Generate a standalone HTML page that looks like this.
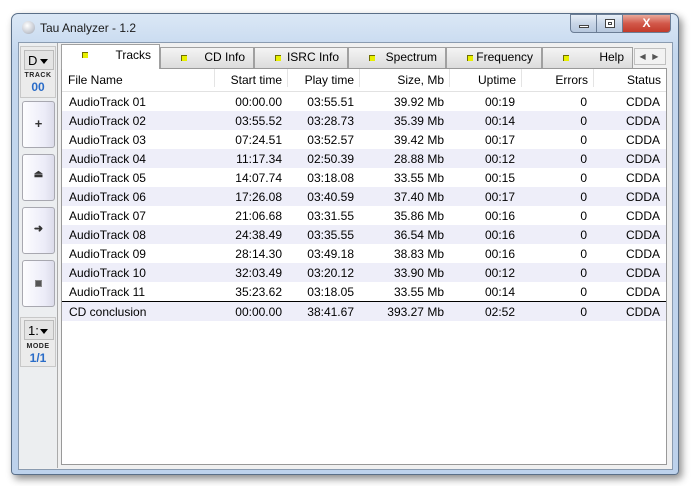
<!DOCTYPE html>
<html><head><style>
*{margin:0;padding:0;box-sizing:border-box}
body{width:691px;height:486px;background:#fff;position:relative;overflow:hidden;font-family:"Liberation Sans",sans-serif;font-size:12px;color:#000}
.win{position:absolute;left:11px;top:13px;width:668px;height:462px;border:1px solid #5a6f88;border-radius:7px 7px 4px 4px;background:linear-gradient(#dbe8f6,#c4d7ee 40px,#bdd2ec);box-shadow:3px 4px 8px rgba(0,0,0,.45)}
.title{position:absolute;left:40px;top:21px;font-size:12px;color:#1a1a1a}
.orb{position:absolute;left:22px;top:21px;width:13px;height:13px;border-radius:50%;background:radial-gradient(circle at 40% 35%,#fff,#c8ccd4 60%,#9aa2ae)}
.cb{position:absolute;top:14px;height:19px;border:1px solid #6b7d95;background:linear-gradient(#e7eef7,#c9d6e7 50%,#b7c8de)}
.client{position:absolute;left:18px;top:42px;width:655px;height:428px;background:#f0f0f0;border:1px solid #8a9bb0}
.lp{position:absolute;left:19px;top:43px;width:39px;height:425px;border-right:1px solid #aaa;background:#eceef0}
.lbox{position:absolute;left:20px;width:36px;border:1px solid #c8c8c8;background:#ebebeb}
.dd{position:absolute;left:24px;width:30px;height:20px;border:1px solid #bbb;background:#e4e4e4;font-size:13px;padding:2px 0 0 3px}
.dd:after{content:"";position:absolute;right:5px;top:8px;border:4px solid transparent;border-top:5px solid #000}
.sm{position:absolute;left:20px;width:36px;text-align:center;font-size:7px;font-weight:bold;letter-spacing:.5px;color:#222}
.num{position:absolute;left:20px;width:36px;text-align:center;font-size:12px;font-weight:bold;color:#2a6cc8}
.btn{position:absolute;left:22px;width:33px;height:47px;border:1px solid #a8a8b0;border-radius:3px;background:linear-gradient(90deg,#fdfdff,#ececf8 70%,#dcdcea)}
.btn span{position:absolute;left:0;right:0;top:14px;text-align:center;font-size:13px;font-weight:bold;color:#333}
.tab{position:absolute;top:47px;height:21px;border:1px solid #a0a0a0;border-bottom:none;background:linear-gradient(#f4f4f4,#dcdcdc);font-size:12px;text-align:right;padding:2px 8px 0 0}
.tab i{position:absolute;left:20px;top:7px;width:6px;height:6px;background:#e8f000;border-left:1px solid #707000;border-top:1px solid #707000}
.tab.sel{top:44px;height:25px;background:#fff;z-index:2;padding-top:3px}
.list{position:absolute;left:61px;top:68px;width:606px;height:397px;background:#fff;border:1px solid #999}
.hdr{position:absolute;left:0;top:0;width:604px;height:23px;background:#fff;border-bottom:1px solid #e2e2e2}
.hdr div,.row div{position:absolute;top:0;text-align:right;white-space:nowrap}
.hdr div{font-size:12px;border-right:1px solid #e4e4e4;height:18px;top:0;padding-top:4px;padding-right:5px}
.row{position:absolute;left:0;width:604px;height:19px;font-size:12px}
.row div{top:3px}
.alt{background:#eeeef9}
</style></head><body>
<div class="win"></div>
<div class="orb"></div>
<div class="title">Tau Analyzer - 1.2</div>
<div class="cb" style="left:570px;width:27px;border-radius:0 0 0 4px"><div style="position:absolute;left:8px;top:10px;width:10px;height:3px;border:1px solid #444;background:#fff"></div></div>
<div class="cb" style="left:596px;width:27px"><div style="position:absolute;left:8px;top:4px;width:10px;height:9px;border:1px solid #444;background:#fff"><div style="margin:2px;height:3px;border:1px solid #444"></div></div></div>
<div class="cb" style="left:622px;width:49px;border-radius:0 0 4px 0;background:linear-gradient(#e9a99a,#d2584a 50%,#c23a2a);color:#fff;font-weight:bold;font-size:12px;text-align:center;line-height:16px">X</div>
<div class="client"></div>
<div class="lp"></div>
<div class="lbox" style="top:46px;height:52px"></div>
<div class="dd" style="top:50px">D</div>
<div class="sm" style="top:72px">TRACK</div>
<div class="num" style="top:80px">00</div>
<div class="btn" style="top:101px"><span>+</span></div>
<div class="btn" style="top:154px"><span style="font-size:10px">&#9167;</span></div>
<div class="btn" style="top:207px"><span style="font-size:11px">&#10140;</span></div>
<div class="btn" style="top:260px"><span><b style="display:inline-block;width:7px;height:7px;background:#555;border:1px solid #888"></b></span></div>
<div class="lbox" style="top:317px;height:50px"></div>
<div class="dd" style="top:320px">1:</div>
<div class="sm" style="top:343px">MODE</div>
<div class="num" style="top:351px">1/1</div>

<div class="tab sel" style="left:61px;width:99px"><i></i>Tracks</div>
<div class="tab" style="left:160px;width:94px"><i></i>CD Info</div>
<div class="tab" style="left:254px;width:94px"><i></i>ISRC Info</div>
<div class="tab" style="left:348px;width:98px"><i></i>Spectrum</div>
<div class="tab" style="left:446px;width:96px"><i></i>Frequency</div>
<div class="tab" style="left:542px;width:91px"><i></i>Help</div>
<div style="position:absolute;left:634px;top:48px;width:32px;height:17px;border:1px solid #c0c0c0;background:#f2f2f2;font-size:8px;color:#555;line-height:15px">&nbsp;&nbsp;&#9664;&nbsp;&nbsp;&nbsp;&#9654;</div>

<div class="list">
<div class="hdr">
<div style="left:0;width:153px;text-align:left;padding-left:6px">File Name</div>
<div style="left:153px;width:73px">Start time</div>
<div style="left:226px;width:72px">Play time</div>
<div style="left:298px;width:90px">Size, Mb</div>
<div style="left:388px;width:72px">Uptime</div>
<div style="left:460px;width:72px">Errors</div>
<div style="left:532px;width:72px;border:none">Status</div>
</div>
<div id="rows"></div>
</div>
<script>
var d=[["AudioTrack 01","00:00.00","03:55.51","39.92 Mb","00:19"],["AudioTrack 02","03:55.52","03:28.73","35.39 Mb","00:14"],["AudioTrack 03","07:24.51","03:52.57","39.42 Mb","00:17"],["AudioTrack 04","11:17.34","02:50.39","28.88 Mb","00:12"],["AudioTrack 05","14:07.74","03:18.08","33.55 Mb","00:15"],["AudioTrack 06","17:26.08","03:40.59","37.40 Mb","00:17"],["AudioTrack 07","21:06.68","03:31.55","35.86 Mb","00:16"],["AudioTrack 08","24:38.49","03:35.55","36.54 Mb","00:16"],["AudioTrack 09","28:14.30","03:49.18","38.83 Mb","00:16"],["AudioTrack 10","32:03.49","03:20.12","33.90 Mb","00:12"],["AudioTrack 11","35:23.62","03:18.05","33.55 Mb","00:14"],["CD conclusion","00:00.00","38:41.67","393.27 Mb","02:52"]];
var h="";d.forEach(function(r,i){var t=23+i*19+(i==11?1:0);
h+='<div class="row'+(i%2?' alt':'')+'" style="top:'+t+'px">'+
'<div style="left:7px;text-align:left">'+r[0]+'</div>'+
'<div style="right:384px">'+r[1]+'</div>'+
'<div style="right:312px">'+r[2]+'</div>'+
'<div style="right:222px">'+r[3]+'</div>'+
'<div style="right:151px">'+r[4]+'</div>'+
'<div style="right:79px">0</div>'+
'<div style="right:6px">CDDA</div></div>';});
h+='<div style="position:absolute;left:0;top:232px;width:604px;height:1px;background:#000"></div>';
document.getElementById("rows").innerHTML=h;
</script>
</body></html>
